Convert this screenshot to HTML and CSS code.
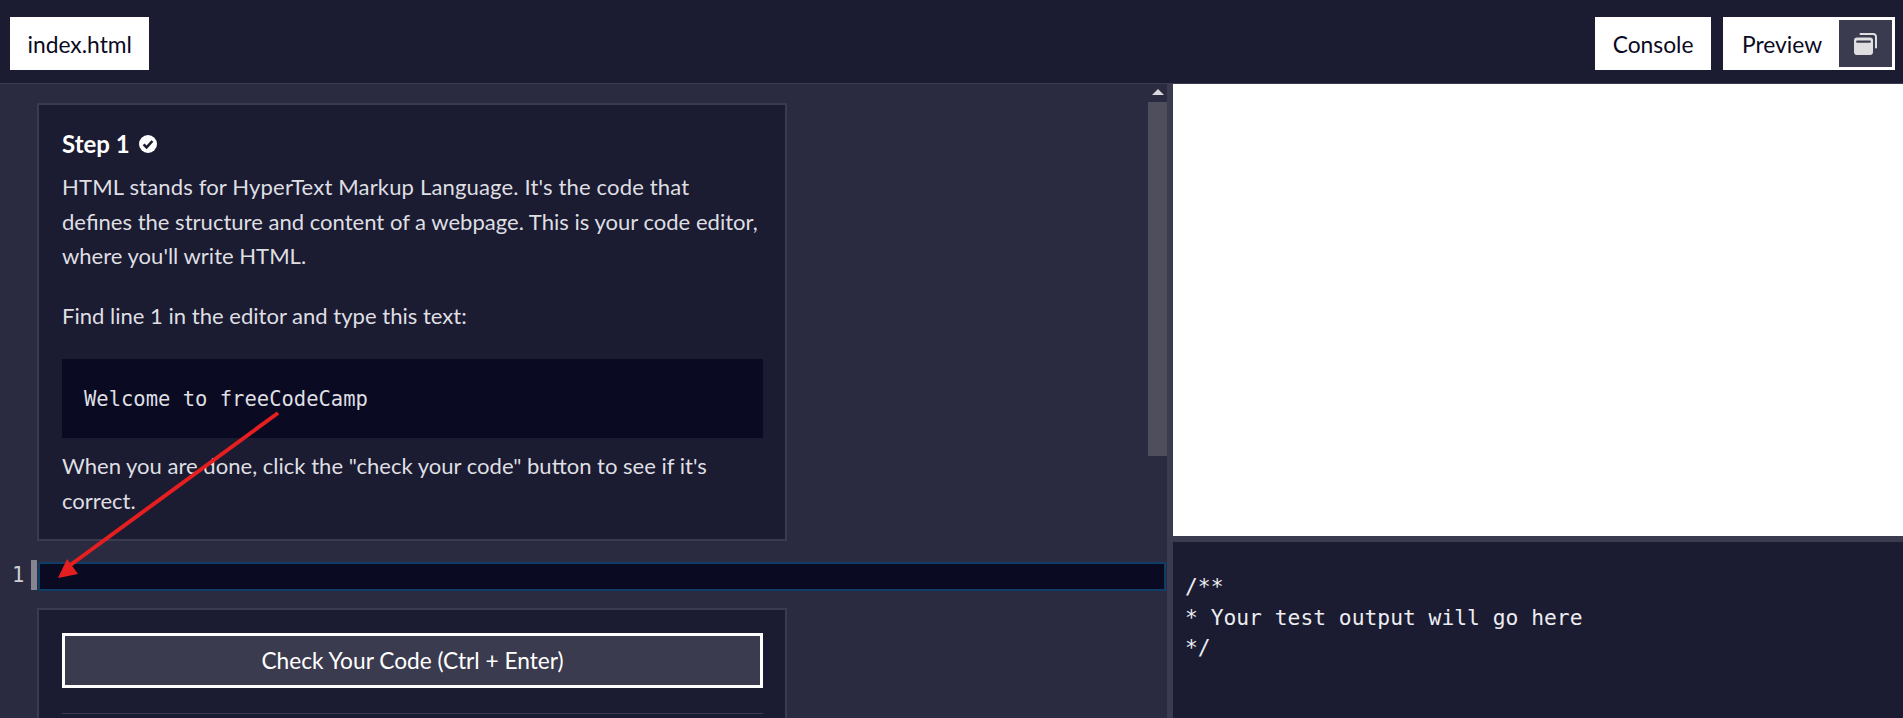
FILE: index.html
```html
<!DOCTYPE html>
<html lang="en">
<head>
<meta charset="utf-8">
<title>index.html</title>
<link rel="stylesheet" href="styles.css">
</head>
<body>
<header class="topbar">
  <button class="tab">index.html</button>
  <div class="top-actions">
    <button class="tab">Console</button>
    <div class="preview-tab">
      <span class="preview-label">Preview</span>
      <span class="popout">
        <svg class="popout-icon" viewBox="0 0 23 22" aria-hidden="true">
          <path d="M6.5 1h12.7a2.8 2.8 0 0 1 2.8 2.8v10.7" fill="none" stroke="#dfdfe2" stroke-width="2" stroke-linecap="round"/>
          <path fill="#dfdfe2" fill-rule="evenodd" d="M3 4.5h13a3 3 0 0 1 3 3V19a3 3 0 0 1-3 3H3a3 3 0 0 1-3-3V7.5a3 3 0 0 1 3-3zM3.2 7.6a1.1 1.1 0 0 0 0 2.2h12.6a1.1 1.1 0 0 0 0-2.2z"/>
        </svg>
      </span>
    </div>
  </div>
</header>
<main class="workspace">
  <section class="editor-pane">
    <div class="editor-scroll">
      <article class="card instructions">
        <h1 class="step-title">Step 1
          <svg class="check" viewBox="0 0 18 18" aria-hidden="true">
            <circle cx="9" cy="9" r="9" fill="#ffffff"/>
            <path d="M4.6 9.4l3 3 5.8-6.4" fill="none" stroke="#1b1b32" stroke-width="2.6"/>
          </svg>
        </h1>
        <p class="para"><span class="first-line">HTML stands for HyperText Markup Language. It's the code that</span><br>defines the structure and content of a webpage. This is your code editor,<br>where you'll write HTML.</p>
        <p class="para para-find">Find line 1 in the editor and type this text:</p>
        <pre class="snippet"><code>Welcome to freeCodeCamp</code></pre>
        <p class="para">When you are done, click the "check your code" button to see if it's<br>correct.</p>
      </article>
      <div class="code-row">
        <div class="gutter"><span class="line-no">1</span><span class="marker"></span></div>
        <div class="code-line"></div>
      </div>
      <article class="card actions">
        <button class="check-btn">Check Your Code (Ctrl + Enter)</button>
        <hr class="rule">
      </article>
    </div>
    <div class="scrollbar">
      <span class="arrow-up"></span>
      <span class="thumb"></span>
    </div>
  </section>
  <section class="output-pane">
    <div class="preview-frame"></div>
    <pre class="console">/**
* Your test output will go here
*/</pre>
  </section>
</main>
<svg class="annotation" viewBox="0 0 1903 718" aria-hidden="true">
  <path class="arrow-shaft" d="M278 413L69 566"/>
  <path class="arrow-head" d="M58 578L67 559L78 574Z"/>
</svg>
</body>
</html>
```
FILE: styles.css
```css
* { box-sizing: border-box; }
html, body { margin: 0; height: 100%; }
body {
  width: 1903px;
  height: 718px;
  overflow: hidden;
  position: relative;
  background: #2a2a40;
  font-family: Lato, "Liberation Sans", sans-serif;
  font-size: 22.05px;
  color: #dfdfe2;
  display: flex;
  flex-direction: column;
}
.topbar {
  height: 84px;
  flex: none;
  background: #1b1b32;
  border-bottom: 1px solid #3b3b4f;
  padding: 17px 8px 0 10px;
  display: flex;
  justify-content: space-between;
  align-items: flex-start;
  font-size: 22.8px;
}
.top-actions { display: flex; gap: 12px; }
.tab {
  height: 53px;
  padding: 0 17.5px;
  border: 0;
  background: #fff;
  color: #0a0a23;
  font: inherit;
}
.preview-tab {
  height: 53px;
  width: 172px;
  border: 3px solid #fff;
  background: #fff;
  color: #0a0a23;
  display: flex;
  justify-content: space-between;
  align-items: center;
  padding-left: 16px;
}
.popout {
  width: 53px;
  height: 47px;
  background: #3b3b4f;
  display: flex;
  align-items: center;
  justify-content: center;
}
.popout-icon { width: 23px; height: 22px; }
.workspace { flex: 1; display: flex; min-height: 0; }
.editor-pane {
  width: 1167px;
  flex: none;
  display: flex;
  overflow: hidden;
}
.editor-scroll { width: 1148px; flex: none; padding-top: 19px; }
.card {
  margin-left: 37px;
  width: 750px;
  border: 2px solid #3b3b4f;
  background: #1b1b32;
  padding: 0 22px 0 23px;
}
.instructions { height: 438px; padding-top: 22px; }
.step-title {
  margin: 0;
  font-size: 24px;
  line-height: 34px;
  font-weight: 700;
  color: #fff;
  display: flex;
  align-items: center;
  gap: 9px;
}
.check { width: 18px; height: 18px; }
.para { margin: 0; line-height: 34.5px; white-space: nowrap; }
.first-line { letter-spacing: 0.15px; }
.instructions .step-title + .para { margin-top: 9px; }
.para-find { margin-top: 25px; }
.snippet {
  margin: 26px 0 11px;
  height: 79px;
  padding: 0 22px;
  background: #0a0a23;
  display: flex;
  align-items: center;
  font-family: "DejaVu Sans Mono", monospace;
  font-size: 20.5px;
  color: #dfdfe2;
}
.code-row {
  margin-top: 19px;
  height: 30px;
  display: flex;
  width: 1166px;
}
.gutter { width: 38px; flex: none; display: flex; justify-content: flex-end; }
.line-no {
  width: 31px;
  padding-left: 12px;
  font-family: "DejaVu Sans Mono", monospace;
  font-size: 20.5px;
  line-height: 30px;
  color: #d0d0d5;
}
.marker { width: 6px; margin-right: 1px; background: #858591; }
.code-line {
  width: 1128px;
  flex: none;
  height: 29px;
  margin-top: 2px;
  background: #0a0a23;
  border: 2px solid #0e3d66;
}
.actions { margin-top: 18px; padding-top: 23px; height: 200px; }
.check-btn {
  display: block;
  width: 100%;
  height: 55px;
  background: #3b3b4f;
  border: 3px solid #fff;
  color: #fff;
  font: inherit;
  font-size: 22.7px;
}
.rule { margin: 25px 0 0; border: 0; border-top: 1px solid #3b3b4f; }
.scrollbar {
  width: 19px;
  flex: none;
  display: flex;
  flex-direction: column;
  align-items: center;
}
.arrow-up {
  margin-top: 5px;
  width: 0;
  height: 0;
  border-left: 6px solid transparent;
  border-right: 6px solid transparent;
  border-bottom: 6px solid #d8d8dc;
}
.thumb { width: 19px; height: 354px; margin-top: 7px; background: #4e4e5c; }
.output-pane {
  flex: 1;
  min-width: 0;
  display: flex;
  flex-direction: column;
  border-left: 6px solid #3b3b4f;
}
.preview-frame { height: 452px; flex: none; background: #fff; }
.console {
  flex: 1;
  margin: 0;
  background: #1b1b32;
  border-top: 6px solid #3b3b4f;
  padding: 30px 0 0 12px;
  font-family: "DejaVu Sans Mono", monospace;
  font-size: 21.3px;
  line-height: 30.5px;
  color: #ecedf0;
}
.annotation {
  position: absolute;
  left: 0;
  top: 0;
  width: 1903px;
  height: 718px;
  pointer-events: none;
}
.arrow-shaft { fill: none; stroke: #e51f1f; stroke-width: 4; }
.arrow-head { fill: #e51f1f; }
```
